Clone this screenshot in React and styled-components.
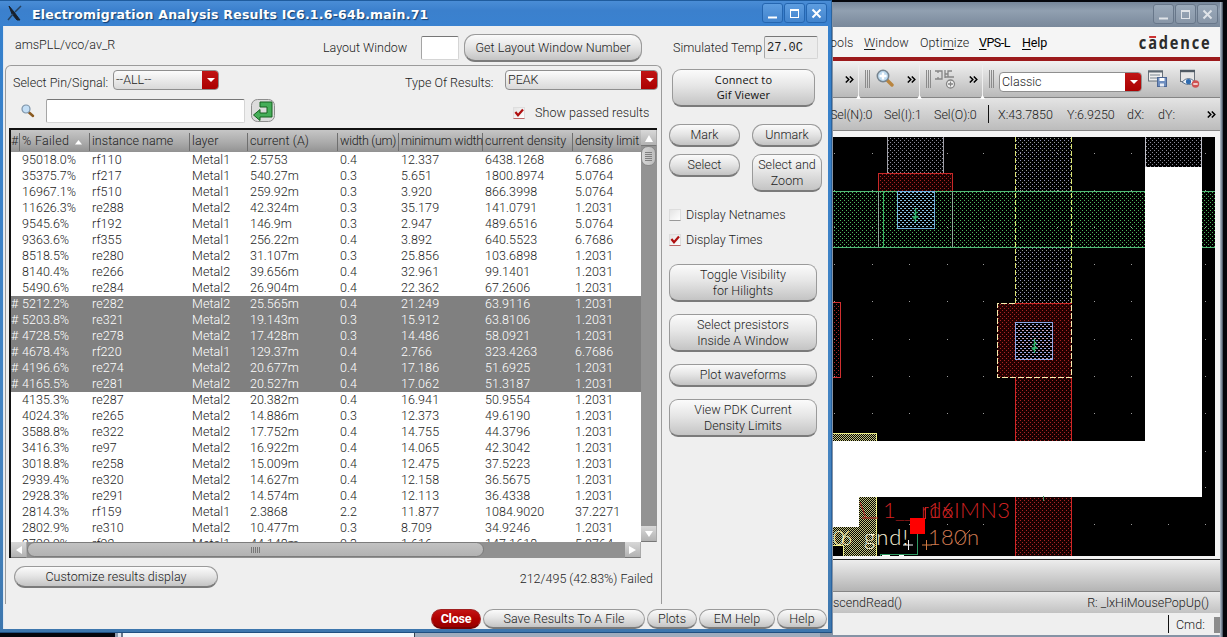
import React from "react";
import styled, { createGlobalStyle, css } from "styled-components";

const Global = createGlobalStyle`
  * { box-sizing: border-box; }
  body { margin: 0; background: #05060c; }
  #root { width: 1227px; height: 637px; overflow: hidden; }
`;

const Desktop = styled.div`
  position: relative;
  width: 1227px;
  height: 637px;
  overflow: hidden;
  background: #05060c;
  font: 300 12.5px/16px Roboto, "Liberation Sans", sans-serif;
  letter-spacing: 0;
  color: #1c1c1c;
  white-space: pre;
`;

/* ---------- layout editor window ---------- */
const EditorWindow = styled.div`
  position: absolute;
  left: 820px;
  top: 2px;
  width: 403px;
  height: 635px;
  display: flex;
  flex-direction: column;
  padding: 0 3px 2px 13px;
  background: linear-gradient(90deg, #8593a5 399px, #b9c3cf 400px, #6c7a8b 402px, #39434f);
`;
const EditorTitle = styled.div`
  height: 25px;
  display: flex;
  justify-content: flex-end;
  align-items: flex-start;
  gap: 1px;
  padding: 2px 2px 0 0;
  background: linear-gradient(#76869a, #91a0b1 35%, #8291a3 75%, #7a899b);
`;
const TitleButton = styled.div`
  width: 21px;
  height: 20px;
  border: 1px solid ${(p) => (p.$blue ? "#2566b0" : "#68778a")};
  border-radius: 3px;
  background: ${(p) => (p.$blue ? "linear-gradient(#5d9de0, #4284cd)" : "linear-gradient(#9aa9ba, #8997a8)")};
  svg { display: block; margin: 2px; }
`;
const MenuBar = styled.div`
  height: 30px;
  display: flex;
  align-items: center;
  background: #f5f5f5;
  padding: 2px 11px 0 0;
`;
const MenuItem = styled.div`
  margin-left: ${(p) => p.$ml}px;
  width: ${(p) => p.$w}px;
  letter-spacing: ${(p) => p.$ls ?? 0.1}px;
  color: ${(p) => (p.$dark ? "#000" : "#1c1c1c")};
  font-weight: ${(p) => (p.$dark ? 400 : 300)};
  u { text-underline-offset: 2px; }
`;
const Logo = styled.div`
  position: relative;
  margin-left: auto;
  font: 700 17px/18px "Open Sans", sans-serif;
  letter-spacing: 2.1px;
  color: #2c2c2c;
  transform: scaleX(0.86);
  transform-origin: right;
  margin-right: -2px;
  &::after {
    content: "";
    position: absolute;
    left: 12px;
    top: 2px;
    width: 8px;
    height: 1.5px;
    background: #c33;
  }
`;
const RedLine = styled.div`
  height: 4px;
  background: #9c1a1c;
`;
const ToolBar = styled.div`
  height: ${(p) => p.$h}px;
  display: flex;
  align-items: center;
  border-bottom: 1px solid #858585;
  background: linear-gradient(${(p) => p.$from || "#f2f2f2"}, ${(p) => p.$to || "#b9b9b9"});
`;
const More = styled.div`
  margin-left: ${(p) => p.$ml}px;
  width: 9px;
  height: 6px;
  svg { display: block; }
`;
const Grip = styled.div`
  margin-left: ${(p) => p.$ml}px;
  width: 5px;
  height: 18px;
  background: repeating-linear-gradient(90deg, #8b8b8b 0 1px, transparent 1px 2px);
`;
const Notch = styled.div`
  align-self: flex-end;
  margin-left: ${(p) => p.$ml}px;
  margin-bottom: -2px;
  width: 5px;
  height: 34px;
  background: linear-gradient(90deg, transparent 2px, #eee 2px 3px, transparent 3px);
  display: flex;
  align-items: flex-end;
  &::after {
    content: "";
    width: 5px;
    height: 4px;
    background: #fff;
    clip-path: polygon(50% 0, 100% 100%, 0 100%);
  }
`;
const IconSlot = styled.div`
  margin-left: ${(p) => p.$ml}px;
  height: 20px;
  svg { display: block; }
`;
const StatusText = styled.div`
  margin-left: ${(p) => p.$ml}px;
  width: ${(p) => p.$w}px;
  padding-top: 2px;
  letter-spacing: ${(p) => p.$ls ?? 0}px;
`;
const Divider = styled.div`
  margin-left: ${(p) => p.$ml}px;
  width: 1px;
  height: ${(p) => p.$h || 18}px;
  background: #111;
`;
const CanvasFrame = styled.div`
  height: 429px;
  padding: 6px 5px 4px 0;
  background: #f4f4f4;
  border-bottom: 1px solid #222;
  svg { display: block; }
`;
const Prompt = styled.div`
  height: 21px;
  display: flex;
  justify-content: space-between;
  align-items: center;
  padding: 0 11px 0 0;
  letter-spacing: 0;
  background: linear-gradient(#e9e9e9, #c2c2c2);
`;
const CommandLine = styled.div`
  height: 22px;
  display: flex;
  align-items: center;
  background: #efefef;
  letter-spacing: 0;
`;
const CommandInput = styled.div`
  margin-left: auto;
  width: 6px;
  height: 16px;
  align-self: flex-end;
  margin-bottom: 2px;
  background: #8c8c8c;
`;

/* ---------- window strip beneath the dialog ---------- */
const LowerWindow = styled.div`
  position: absolute;
  left: 115px;
  top: 633px;
  width: 720px;
  height: 4px;
  display: flex;
  background: linear-gradient(90deg, #8d9bad 0 3px, #dce4ee 3px 6px, #687689 6px 8px, #f2f6fb 8px 299px, #36404d 299px 300px, #9eacbd 300px);
`;

/* ---------- dialog ---------- */
const Dialog = styled.div`
  position: absolute;
  left: 0;
  top: 0;
  width: 832px;
  height: 633px;
  display: flex;
  flex-direction: column;
  padding: 0 3px 3px;
  background: linear-gradient(#3480cd, #4684bf 80%, #3d76ad);
  border-bottom: 1px solid #1f4f80;
  border-right: 1px solid #2a64a0;
`;
const DialogTitle = styled.div`
  height: 26px;
  margin: 0 -3px;
  display: flex;
  align-items: center;
  gap: 1px;
  padding: 0 4px 0 7px;
  background: linear-gradient(#1f5c9e 0 1px, #4a8dd6 1px, #3b80cd 40%, #3a82d0);
`;
const TitleText = styled.div`
  flex: 1;
  margin-left: 8px;
  font: bold 12.5px/16px "DejaVu Sans", sans-serif;
  letter-spacing: 0.23px;
  color: #fff;
  text-shadow: 1px 1px 1px #123c6c;
  padding-top: 3px;
`;
const Body = styled.div`
  flex: 1;
  display: flex;
  background: #efefef;
  border-left: 1px solid #dfe8f2;
  position: relative;
`;
const Main = styled.div`
  width: 658px;
  display: flex;
  flex-direction: column;
`;
const TopRow = styled.div`
  height: 39px;
  display: flex;
  align-items: center;
  padding: 5px 0 0 11px;
`;
const Label = styled.div`
  width: ${(p) => p.$w}px;
  letter-spacing: ${(p) => p.$ls ?? 0}px;
  margin: ${(p) => p.$m || 0};
`;
const Field = styled.div`
  width: ${(p) => p.$w}px;
  height: ${(p) => p.$h}px;
  margin: ${(p) => p.$m || 0};
  padding: 3px 2px;
  background: ${(p) => (p.$readOnly ? "#ececec" : "#fff")};
  border: 1px solid #d5d5d5;
  border-top: 1px solid #777;
  border-left-color: #a5a5a5;
  border-radius: 2px;
  ${(p) => p.$readOnly && css`
    font: 12px/17px "Liberation Mono", monospace;
    letter-spacing: 0;
  `}
`;
const Button = styled.div`
  width: ${(p) => p.$w}px;
  height: ${(p) => p.$h}px;
  flex: none;
  margin: ${(p) => p.$m || 0};
  display: flex;
  align-items: center;
  justify-content: center;
  text-align: center;
  letter-spacing: ${(p) => p.$ls ?? 0.05}px;
  border: 1px solid #9a9a9a;
  border-bottom: 2px solid #7b7b7b;
  border-radius: ${(p) => (p.$h > 30 ? 9 : 11)}px;
  background: linear-gradient(#fbfbfb, #e6e6e6 45%, #c4c4c4);
  ${(p) => p.$plain && css`
    font: 11px/15px "Open Sans", sans-serif;
    letter-spacing: 0.15px;
    padding-bottom: 1px;
    color: #111;
  `}
  ${(p) => p.$primary && css`
    color: #fff;
    font-weight: bold;
    border-color: #a02020;
    border-bottom-color: #700;
    background: linear-gradient(#c41414, #b00000 50%, #980000);
  `}
`;
const Group = styled.div`
  margin-left: 1px;
  height: 539px;
  border: 1px solid #9b9b9b;
  border-bottom: none;
  border-radius: 6px 6px 0 0;
  display: flex;
  flex-direction: column;
  padding: 0 3px;
`;
const Filters = styled.div`
  height: 29px;
  display: flex;
  align-items: flex-start;
  padding: 4px 0 0 4px;
`;
const Select = styled.div`
  width: ${(p) => p.$w}px;
  height: 20px;
  margin: ${(p) => p.$m || 0};
  display: flex;
  justify-content: space-between;
  padding-left: 2px;
  line-height: 18px;
  letter-spacing: ${(p) => p.$ls ?? 0}px;
  border: 1px solid #8f8f8f;
  border-radius: 4px;
  overflow: hidden;
  background: ${(p) => (p.$white ? "#fff" : "linear-gradient(#fcfcfc, #d9d9d9)")};
`;
const SelectArrow = styled.div`
  width: 17px;
  margin: -1px -1px -1px 0;
  display: flex;
  align-items: center;
  justify-content: center;
  background: linear-gradient(#c21616, #a00);
  &::after {
    content: "";
    border: 4px solid transparent;
    border-top-color: #fff;
    border-bottom: 0;
  }
`;
const SearchRow = styled.div`
  height: 33px;
  display: flex;
  align-items: center;
  padding: 0 0 1px 11px;
`;
const Check = styled.div`
  width: 12px;
  height: 12px;
  margin: ${(p) => p.$m || 0};
  background: linear-gradient(135deg, #e4e4e4, #fff);
  border: 1px solid #dedede;
  border-bottom-color: ${(p) => (p.$on ? "#b66" : "#999")};
  svg { display: block; margin: -1px; }
`;

/* ---------- table ---------- */
const TableBox = styled.div`
  width: 648px;
  height: 430px;
  display: grid;
  grid-template-columns: 630px 16px;
  grid-template-rows: 412px 16px;
  border-top: 2px solid #111;
  border-left: 2px solid #111;
`;
const Table = styled.div`
  grid-row: 1;
  height: 412px;
  overflow: hidden;
  background: #fff;
`;
const columns = "9px 70px 100px 58px 90px 61px 84px 90px 68px";
const HeadRow = styled.div`
  display: grid;
  grid-template-columns: ${columns};
  height: 22px;
  background: linear-gradient(#c6c6c6, #a9a9a9 60%, #929292);
`;
const HeadCell = styled.div`
  padding: 3px 0 0 ${(p) => (p.$first ? 0 : 2)}px;
  letter-spacing: ${(p) => p.$ls}px;
  background: linear-gradient(#6f6f6f, #6f6f6f) right 3px / 1px 18px no-repeat;
  &:last-child { background: none; }
  svg { margin-left: 6px; }
`;
const Row = styled.div`
  display: grid;
  grid-template-columns: ${columns};
  height: 16px;
  ${(p) => p.$selected && css`
    background: #808080;
    color: #fff;
  `}
`;
const Cell = styled.div`
  padding-left: ${(p) => (p.$i === 0 ? 0 : 2)}px;
  letter-spacing: ${(p) => (p.$i === 4 ? 0 : p.$i === 1 ? 0.03 : 0.08)}px;
`;
const VScroll = styled.div`
  background: #939393;
  display: flex;
  flex-direction: column;
`;
const HScroll = styled.div`
  grid-row: 2;
  grid-column: 1;
  background: #919191;
  display: flex;
`;
const ScrollButton = styled.div`
  width: 16px;
  height: 16px;
  flex: none;
  background: linear-gradient(#d8d8d8, #b2b2b2);
  border-bottom: 1px solid #777;
  border-right: 1px solid #aaa;
  svg { display: block; }
`;
const VThumb = styled.div`
  width: 15px;
  height: 20px;
  margin-bottom: auto;
  border: 1px solid #888;
  border-radius: 7px;
  background: linear-gradient(90deg, #d6d6d6, #bdbdbd);
  padding: 5px 3px;
  &::after {
    content: "";
    display: block;
    height: 9px;
    background: repeating-linear-gradient(#808080 0 1px, transparent 1px 2px);
  }
`;
const HThumb = styled.div`
  width: 457px;
  height: 15px;
  margin-right: auto;
  border: 1px solid #7c7c7c;
  border-radius: 8px;
  background: linear-gradient(#c2c2c2, #b2b2b2);
  padding: 4px 0;
  &::after {
    content: "";
    display: block;
    width: 9px;
    height: 6px;
    margin: 0 auto;
    background: repeating-linear-gradient(90deg, #777 0 1px, transparent 1px 2px);
  }
`;
const Summary = styled.div`
  display: flex;
  align-items: center;
  justify-content: space-between;
  padding: 8px 5px 0 5px;
`;
const Footer = styled.div`
  position: absolute;
  right: 1px;
  bottom: 0;
  display: flex;
  gap: 2px;
`;
const Side = styled.div`
  display: flex;
  flex-direction: column;
  padding-left: 7px;
  width: 170px;
`;
const SideRow = styled.div`
  display: flex;
  align-items: flex-start;
  gap: ${(p) => p.$gap || 0}px;
  margin: ${(p) => p.$m || 0};
`;
const CheckRow = styled.div`
  display: flex;
  align-items: center;
  gap: 5px;
  height: 25px;
`;

const data = `95018.0% rf110 Metal1 2.5753 0.4 12.337 6438.1268 6.7686
35375.7% rf217 Metal1 540.27m 0.3 5.651 1800.8974 5.0764
16967.1% rf510 Metal1 259.92m 0.3 3.920 866.3998 5.0764
11626.3% re288 Metal2 42.324m 0.3 35.179 141.0791 1.2031
9545.6% rf192 Metal1 146.9m 0.3 2.947 489.6516 5.0764
9363.6% rf355 Metal1 256.22m 0.4 3.892 640.5523 6.7686
8518.5% re280 Metal2 31.107m 0.3 25.856 103.6898 1.2031
8140.4% re266 Metal2 39.656m 0.4 32.961 99.1401 1.2031
5490.6% re284 Metal2 26.904m 0.4 22.362 67.2606 1.2031
5212.2% re282 Metal2 25.565m 0.4 21.249 63.9116 1.2031
5203.8% re321 Metal2 19.143m 0.3 15.912 63.8106 1.2031
4728.5% re278 Metal2 17.428m 0.3 14.486 58.0921 1.2031
4678.4% rf220 Metal1 129.37m 0.4 2.766 323.4263 6.7686
4196.6% re274 Metal2 20.677m 0.4 17.186 51.6925 1.2031
4165.5% re281 Metal2 20.527m 0.4 17.062 51.3187 1.2031
4135.3% re287 Metal2 20.382m 0.4 16.941 50.9554 1.2031
4024.3% re265 Metal2 14.886m 0.3 12.373 49.6190 1.2031
3588.8% re322 Metal2 17.752m 0.4 14.755 44.3796 1.2031
3416.3% re97 Metal2 16.922m 0.4 14.065 42.3042 1.2031
3018.8% re258 Metal2 15.009m 0.4 12.475 37.5223 1.2031
2939.4% re320 Metal2 14.627m 0.4 12.158 36.5675 1.2031
2928.3% re291 Metal2 14.574m 0.4 12.113 36.4338 1.2031
2814.3% rf159 Metal1 2.3868 2.2 11.877 1084.9020 37.2271
2802.9% re310 Metal2 10.477m 0.3 8.709 34.9246 1.2031
2790.9% rf92 Metal1 44.148m 0.3 1.616 147.1618 5.0764`
  .split("\n")
  .map((line) => line.split(" "));

const heads = [
  ["#", 0], ["% Failed", 0.3], ["instance name", 0.05], ["layer", 0.1], ["current (A)", 0.1],
  ["width (um)", -0.3], ["minimum width", -0.3], ["current density", -0.02], ["density limit", -0.15],
];

const Chevrons = ({ ml }) => (
  <More $ml={ml}>
    <svg width="9" height="7" fill="none" stroke="#000" strokeWidth="1.5">
      <path d="M.8 .5 3.8 3.500 .8 6.500M4.8 .5 7.8 3.500 4.8 6.500" />
    </svg>
  </More>
);

const WindowButtons = ({ blue }) => {
  const stroke = blue ? "#fff" : "#dfe3e8";
  return (
    <>
      <TitleButton $blue={blue}>
        <svg width="15" height="15"><path d="M3 11.5h9" stroke={stroke} strokeWidth="2" /></svg>
      </TitleButton>
      <TitleButton $blue={blue}>
        <svg width="15" height="15" fill="none" stroke={stroke}><rect x="3.5" y="3.5" width="8" height="8" /><path d="M3 4h9" strokeWidth="2" /></svg>
      </TitleButton>
      <TitleButton $blue={blue}>
        <svg width="15" height="15"><path d="M3.5 3.5l8 8m0-8-8 8" stroke={stroke} strokeWidth="2" /></svg>
      </TitleButton>
    </>
  );
};

const Tick = ({ on, m }) => (
  <Check $on={on} $m={m}>
    {on && (
      <svg width="12" height="12"><path d="M2.4 5 5 8.2 10 2.6" fill="none" stroke="#b01010" strokeWidth="2.2" /></svg>
    )}
  </Check>
);

const Tri = ({ d }) => (
  <svg width="16" height="16"><path d={d} fill="#fff" /></svg>
);

const Dots = ({ id, color, second }) => (
  <pattern id={id} width="4" height="4" patternUnits="userSpaceOnUse" shapeRendering="crispEdges">
    <rect width="1" height="1" x="0" y="0" fill={color} />
    <rect width="1" height="1" x="2" y="2" fill={second || color} />
  </pattern>
);

const gridX = [834, 872, 909, 947, 983, 1020, 1057, 1094, 1131, 1168, 1205];
const gridY = [153, 190, 227, 264, 301, 339, 376, 413, 451, 487, 524];

const Star = ({ x, y }) => (
  <path d={`M${x} ${y - 7}v14M${x - 3} ${y + 2}h6M${x - 2} ${y - 1}l4.5-2M${x - 2} ${y + 4}l4-3`} stroke="#2fb56a" strokeWidth="1.3" fill="none" />
);

const LayoutCanvas = () => (
  <svg width="382" height="419" viewBox="833 137 382 419">
    <defs>
      <Dots id="green" color="#4cb45c" />
      <Dots id="lavender" color="#9494b8" second="#949c90" />
      <Dots id="red" color="#a82424" />
      <Dots id="grey" color="#8a8a98" />
      <pattern id="blue" width="4" height="4" patternUnits="userSpaceOnUse" shapeRendering="crispEdges">
        <rect width="2" height="1" fill="#86bfe0" /><rect x="2" y="2" width="2" height="1" fill="#86bfe0" />
      </pattern>
      <pattern id="violet" width="4" height="4" patternUnits="userSpaceOnUse" shapeRendering="crispEdges">
        <rect width="2" height="1" fill="#98a6e8" /><rect x="2" y="2" width="2" height="1" fill="#c8a0b8" />
      </pattern>
      <pattern id="yellow" width="2" height="2" patternUnits="userSpaceOnUse" shapeRendering="crispEdges">
        <rect width="1" height="1" fill="#c4c480" /><rect x="1" y="1" width="1" height="1" fill="#c4c480" />
      </pattern>
    </defs>
    <rect x="833" y="137" width="382" height="419" fill="#000" />
    <g fill="#9a9a9a" shapeRendering="crispEdges">
      {gridX.map((x) => gridY.map((y) => <rect key={`${x}-${y}`} x={x} y={y} width="1" height="1" />))}
    </g>
    <g shapeRendering="crispEdges" fill="none">
      <rect x="887" y="137" width="57" height="36" fill="url(#grey)" />
      <path d="M887.5 137v36M943.5 137v36" stroke="#a0a0a8" />
      <rect x="1015" y="137" width="57" height="54" fill="url(#lavender)" />
      <rect x="1015" y="247" width="57" height="56" fill="url(#lavender)" />
      <rect x="878" y="173" width="75" height="18" fill="#180000" />
      <rect x="878" y="173" width="75" height="18" fill="url(#red)" />
      <path d="M878.5 191V173.500H952.500V191" stroke="#c82828" />
      <rect x="833" y="191" width="382" height="56" fill="url(#green)" />
      <path d="M833 191.500H1215M833 247.500H1215" stroke="#52b878" />
      <path d="M878.500 192v55M952.500 192v55" stroke="#8fa89a" />
      <path d="M883.500 192v55" stroke="#35b060" />
      <rect x="897.500" y="191.500" width="37" height="37" fill="#000" />
      <rect x="897.500" y="191.500" width="37" height="37" fill="url(#blue)" stroke="#6faedb" />
      <path d="M1015.500 137v166M1071.500 137v166" stroke="#d8e070" strokeDasharray="5 2" />
      <rect x="833" y="302" width="8" height="76" fill="url(#red)" />
      <path d="M833 302.500h7.500v75h-7.500" stroke="#d03030" />
      <rect x="1015" y="378" width="57" height="178" fill="#180000" />
      <rect x="1015" y="378" width="57" height="178" fill="url(#red)" />
      <path d="M1015.500 378v178M1071.500 378v178" stroke="#d02525" />
      <rect x="997" y="303" width="75" height="75" fill="#240000" />
      <rect x="997" y="303" width="75" height="75" fill="url(#red)" />
      <path d="M1015 303.500h57" stroke="#d02525" />
      <path d="M1015 303.500H997.500v74h74V303" stroke="#f6edb0" strokeDasharray="6 2" />
      <rect x="1015.500" y="322.500" width="37" height="37" fill="#000" />
      <rect x="1015.500" y="322.500" width="37" height="37" fill="url(#violet)" stroke="#8ba6e6" />
      <rect x="1145" y="137" width="57" height="30" fill="url(#grey)" />
      <path d="M1145.500 137v30M1201.500 137v30" stroke="#c0c0c8" />
      <rect x="833" y="433" width="44" height="8" fill="url(#yellow)" />
      <rect x="859" y="497" width="18" height="59" fill="url(#yellow)" />
      <rect x="833" y="527" width="26" height="18" fill="url(#yellow)" />
      <rect x="844" y="545" width="15" height="11" fill="url(#yellow)" />
      <path d="M833 433.500h43.500v7.500M876.500 497v59M833 545.500h10.500V556" stroke="#eeee88" />
      <path d="M1145 167h57v330H859v30h-26v-86h312z" fill="#fff" />
      <path d="M917.500 534v20.500H880.500v1.500" stroke="#2f9a62" />
      <path d="M882 555.500h8M899 555.500h5" stroke="#fff" />
      <path d="M1043.500 496v5" stroke="#4a9a6a" />
    </g>
    <Star x={915.5} y={215} />
    <Star x={1034.5} y={346} />
    <g fontFamily="Lato, sans-serif" fontSize="22" fontWeight="300" letterSpacing="0">
      <text x="883" y="518" fill="#d02222" textLength="40">1___</text>
      <text x="921" y="518" fill="#c82020" textLength="32">rdx</text>
      <text x="928" y="518" fill="#d02222" textLength="82">16IMN3</text>
      <text x="833" y="545" fill="#fbf8c8" textLength="19" fontSize="20">06</text>
      <text x="864" y="545" fill="#f5f0d8" textLength="44">gnd!</text>
      <text x="928" y="545" fill="#cf7a50" textLength="51">180n</text>
    </g>
    <path d="M860 502l6 16M862 518h16" stroke="#b02020" fill="none" />
    <path d="M957 544l13-14" stroke="#cf7a50" />
    <path d="M903 545h10M908.500 540v10" stroke="#f5f5f5" />
    <path d="M922 545h10M926.500 540v10" stroke="#d07a40" />
    <path d="M925.500 507v12" stroke="#d02222" />
    <rect x="910" y="518" width="15" height="16" fill="#f00" />
  </svg>
);

export default function App() {
  return (
    <Desktop>
      <Global />
      <LowerWindow />
      <EditorWindow>
        <EditorTitle><WindowButtons /></EditorTitle>
        <MenuBar>
          <MenuItem $ml={-3} $w={22}>ools</MenuItem>
          <MenuItem $ml={12} $w={44}><u>W</u>indow</MenuItem>
          <MenuItem $ml={12} $w={48}>Opti<u>m</u>ize</MenuItem>
          <MenuItem $ml={11} $w={31} $dark $ls={-0.5}><u>V</u>PS-L</MenuItem>
          <MenuItem $ml={12} $w={26} $dark $ls={-0.1}><u>H</u>elp</MenuItem>
          <Logo>cadence</Logo>
        </MenuBar>
        <RedLine />
        <ToolBar $h={37}>
          <Chevrons ml={12} />
          <Notch $ml={2} />
          <Grip $ml={4} />
          <IconSlot $ml={6}>
            <svg width="18" height="18">
              <path d="M11 11l5 5" stroke="#b9853f" strokeWidth="3.4" strokeLinecap="round" />
              <circle cx="7" cy="7" r="5.700" fill="#bcd9ee" stroke="#76848f" strokeWidth="1.500" />
              <path d="M7 3.500v7M3.500 7h7" stroke="#fff" strokeWidth="2.400" />
            </svg>
          </IconSlot>
          <Chevrons ml={13} />
          <Notch $ml={1} />
          <Grip $ml={4} />
          <IconSlot $ml={4}>
            <svg width="21" height="20" fill="none" stroke="#858585" strokeWidth="1.300">
              <path d="M0 2h7v8H0M3 2v2M3 10V8M10 1v8M10 5h3V2h4M10 8h9M13 5v3" />
              <circle cx="15.500" cy="15" r="4" fill="#f2f2f2" />
              <path d="M15.500 12.500v5M13 15h5" />
            </svg>
          </IconSlot>
          <Chevrons ml={13} />
          <Notch $ml={2} />
          <Grip $ml={4} />
          <Select $w={143} $m="6px 0 0 5px" $white>Classic<SelectArrow /></Select>
          <IconSlot $ml={6}>
            <svg width="20" height="20">
              <rect x=".5" y="2" width="14" height="10" fill="#efefef" stroke="#69727b" />
              <path d="M0 2.500h15" stroke="#5d6872" strokeWidth="2" />
              <path d="M2 6h10M2 9h8" stroke="#7b858e" />
              <rect x="9.500" y="8.500" width="9" height="9" fill="#6f8fc0" stroke="#4d6794" />
              <rect x="11.500" y="9" width="5" height="3" fill="#fff" />
              <rect x="12" y="14.500" width="4" height="3" fill="#e8edf5" />
            </svg>
          </IconSlot>
          <IconSlot $ml={12}>
            <svg width="20" height="20">
              <rect x=".5" y="1.500" width="14" height="11" fill="#e6e6e6" stroke="#69727b" />
              <path d="M0 2h15" stroke="#4f5a64" strokeWidth="2.400" />
              <path d="M2 13q6.500-7 13 0q-6.500 5-13 0z" fill="#f4f8fc" stroke="#5a6f88" />
              <circle cx="8.500" cy="12.500" r="2.600" fill="#2e6bb0" />
              <circle cx="15.500" cy="15" r="3.700" fill="#cf5252" />
              <path d="M13.300 15h4.400" stroke="#fff" strokeWidth="1.400" />
            </svg>
          </IconSlot>
        </ToolBar>
        <ToolBar $h={33} $from="#e4e4e4" $to="#bcbcbc">
          <StatusText $ml={-3} $w={54} $ls={-0.1}>Sel(N):0</StatusText>
          <StatusText $w={50}>Sel(I):1</StatusText>
          <StatusText $w={54}>Sel(O):0</StatusText>
          <Divider />
          <StatusText $ml={9} $w={69}>X:43.7850</StatusText>
          <StatusText $w={60}>Y:6.9250</StatusText>
          <StatusText $w={31}>dX:</StatusText>
          <StatusText $w={31}>dY:</StatusText>
          <Chevrons ml={18} />
        </ToolBar>
        <CanvasFrame><LayoutCanvas /></CanvasFrame>
        <ToolBar $h={32} $from="#ededed" $to="#b4b4b4" />
        <Prompt><span>scendRead()</span><span>R: _lxHiMousePopUp()</span></Prompt>
        <CommandLine>
          <Divider $ml={335} />
          <StatusText $ml={7} $w={30}>Cmd:</StatusText>
          <CommandInput />
        </CommandLine>
      </EditorWindow>

      <Dialog>
        <DialogTitle>
          <svg width="16" height="18" viewBox="0 0 16 18">
            <path d="M2 2l5 6 6 8h-3L5 10z" fill="#17202c" stroke="#17202c" />
            <path d="M14 2 8 8M6 10l-5 6" stroke="#27425f" strokeWidth="1.500" />
          </svg>
          <TitleText>Electromigration Analysis Results IC6.1.6-64b.main.71</TitleText>
          <WindowButtons blue />
        </DialogTitle>
        <Body>
          <Main>
            <TopRow>
              <Label $w={308} $m="-7px 0 0">amsPLL/vco/av_R</Label>
              <Label $w={98}>Layout Window</Label>
              <Field $w={38} $h={24} />
              <Button $w={178} $h={28} $m="0 0 0 5px">Get Layout Window Number</Button>
            </TopRow>
            <Group>
              <Filters>
                <Label $w={100} $m="5px 0 0">Select Pin/Signal:</Label>
                <Select $w={106}>--ALL--<SelectArrow /></Select>
                <Label $w={100} $m="5px 0 0 186px">Type Of Results:</Label>
                <Select $w={153}>PEAK<SelectArrow /></Select>
              </Filters>
              <SearchRow>
                <svg width="16" height="16">
                  <path d="M8.500 9l4.500 4" stroke="#8a5a20" strokeWidth="2.500" strokeLinecap="round" />
                  <circle cx="6" cy="6" r="4" fill="#c3def5" stroke="#7d93a8" strokeWidth="1.200" />
                </svg>
                <Field $w={199} $h={24} $m="0 6px 0 10px" />
                <svg width="25" height="24" viewBox="0 0 25 24">
                  <rect x=".5" y=".5" width="23" height="22" rx="6" fill="#dcdcdc" stroke="#8d8d8d" />
                  <path d="M9 3h12v15H9v3.500L2.500 16 9 10.500V14h7V8H9z" fill="#45ae58" stroke="#14611f" strokeLinejoin="round" />
                </svg>
                <Tick on m="4px 0 0 237px" />
                <Label $m="4px 0 0 10px" $ls={0.05}>Show passed results</Label>
              </SearchRow>
              <TableBox>
                <Table>
                  <HeadRow>
                    {heads.map(([text, ls], i) => (
                      <HeadCell key={text} $first={i === 0} $ls={ls}>
                        {text}
                        {i === 1 && <svg width="7" height="5"><path d="M3.500 0 7 4.500H0z" fill="#fff" /></svg>}
                      </HeadCell>
                    ))}
                  </HeadRow>
                  {data.map((cells, r) => {
                    const selected = r >= 9 && r <= 14;
                    return (
                      <Row key={r} $selected={selected}>
                        {[selected ? "#" : "", ...cells].map((c, i) => <Cell key={i} $i={i}>{c}</Cell>)}
                      </Row>
                    );
                  })}
                </Table>
                <VScroll>
                  <ScrollButton><Tri d="M8 5l4 7H4z" /></ScrollButton>
                  <VThumb />
                  <ScrollButton><Tri d="M4 5h8l-4 6z" /></ScrollButton>
                </VScroll>
                <HScroll>
                  <ScrollButton><Tri d="M11 4v8L5 8z" /></ScrollButton>
                  <HThumb />
                  <ScrollButton><Tri d="M4 4v8l7-4z" /></ScrollButton>
                </HScroll>
              </TableBox>
              <Summary>
                <Button $w={204} $h={22}>Customize results display</Button>
                <Label $m="3px 0 0">212/495 (42.83%) Failed</Label>
              </Summary>
            </Group>
          </Main>
          <Side>
            <SideRow $m="10px 0 0 4px">
              <Label $w={91} $m="4px 0 0">Simulated Temp</Label>
              <Field $w={54} $h={23} $readOnly>27.0C</Field>
            </SideRow>
            <Button $w={143} $h={38} $m="10px 0 17px 3px" $plain>{"Connect to\nGif Viewer"}</Button>
            <SideRow $gap={12}>
              <Button $w={71} $h={23}>Mark</Button>
              <Button $w={70} $h={23}>Unmark</Button>
            </SideRow>
            <SideRow $gap={12} $m="7px 0 10px">
              <Button $w={71} $h={23}>Select</Button>
              <Button $w={70} $h={38}>{"Select and\nZoom"}</Button>
            </SideRow>
            <CheckRow><Tick />Display Netnames</CheckRow>
            <CheckRow><Tick on />Display Times</CheckRow>
            <Button $w={148} $h={38} $m="12px 0 0">{"Toggle Visibility\nfor Hilights"}</Button>
            <Button $w={148} $h={38} $m="12px 0 0">{"Select presistors\nInside A Window"}</Button>
            <Button $w={148} $h={23} $m="12px 0 0">Plot waveforms</Button>
            <Button $w={148} $h={38} $m="12px 0 0">{"View PDK Current\nDensity Limits"}</Button>
          </Side>
          <Footer>
            <Button $w={50} $h={20} $primary $ls={-0.2}>Close</Button>
            <Button $w={162} $h={20}>Save Results To A File</Button>
            <Button $w={50} $h={20}>Plots</Button>
            <Button $w={76} $h={20}>EM Help</Button>
            <Button $w={50} $h={20}>Help</Button>
          </Footer>
        </Body>
      </Dialog>
    </Desktop>
  );
}
